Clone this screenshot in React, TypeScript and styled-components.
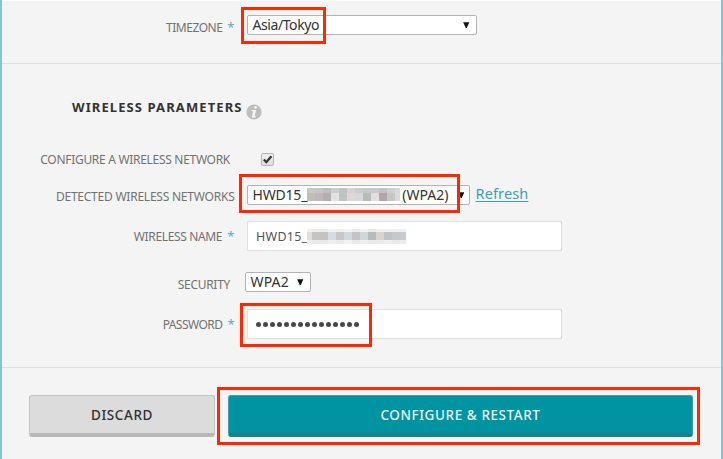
import React from "react";
import styled, { createGlobalStyle } from "styled-components";

const GlobalStyle = createGlobalStyle`
  *, *::before, *::after { box-sizing: border-box; }
  body { margin: 0; background: #f4f4f4; overflow: hidden; }
`;

const Page = styled.main`
  width: 723px;
  height: 459px;
  overflow: hidden;
  background: #f4f4f4;
  border: solid #7fc6ce;
  border-width: 0 2px;
  box-shadow: inset 0 1px #fcfcfc;
  font-family: "Noto Sans", "Open Sans", sans-serif;
  color: #333;
`;

const Section = styled.section<{ $height: number; $top: number }>`
  height: ${(p) => p.$height}px;
  padding-top: ${(p) => p.$top}px;
  border-bottom: 1px solid #dedede;
`;

const Heading = styled.header`
  display: flex;
  align-items: flex-start;
  height: 51px;
  padding-left: 70px;
`;

const Title = styled.h2`
  margin: 0;
  width: 174px;
  font-size: 13px;
  line-height: 16px;
  font-weight: 700;
  letter-spacing: 1.1px;
  white-space: nowrap;
`;

const InfoIcon = styled.svg`
  flex: none;
  width: 16px;
  height: 16px;
  margin-top: 5px;
`;

const Row = styled.div<{ $height: number; $after?: number }>`
  display: flex;
  align-items: flex-start;
  height: ${(p) => p.$height}px;
  margin-bottom: ${(p) => p.$after ?? 0}px;
`;

const Label = styled.label<{ $line: number; $end: number; $track?: number }>`
  flex: none;
  width: 245px;
  padding-right: ${(p) => p.$end}px;
  text-align: right;
  white-space: nowrap;
  font-size: 12px;
  line-height: ${(p) => p.$line}px;
  letter-spacing: ${(p) => p.$track ?? -0.3}px;
  color: #727272;
`;

const Star = styled.span`
  margin-left: 5px;
  font-size: 13px;
  line-height: 1;
  color: #5fa9b5;
`;

const Control = styled.div<{ $shift?: number }>`
  position: relative;
  display: flex;
  margin-left: ${(p) => p.$shift ?? 0}px;
`;

const Select = styled.div<{ $width: number; $track?: number; $arrow: number }>`
  display: flex;
  align-items: center;
  width: ${(p) => p.$width}px;
  height: 19.5px;
  padding: 0 ${(p) => p.$arrow}px 0 4.5px;
  background: #fff;
  border: 1px solid #b4b4b4;
  border-radius: 2px;
  font-size: 14px;
  line-height: 17px;
  letter-spacing: ${(p) => p.$track ?? 0}px;
  white-space: nowrap;
`;

const Arrow = styled.svg`
  flex: none;
  width: 6.5px;
  height: 6.5px;
  margin-left: auto;
  fill: #111;
`;

const Suffix = styled.span`
  margin-left: 2px;
  letter-spacing: 0.05px;
`;

const Field = styled.div`
  display: flex;
  align-items: center;
  width: 315px;
  height: 30px;
  padding-left: 8px;
  background: #fff;
  border: 1px solid #e0e0e0;
  font-size: 12.5px;
  letter-spacing: 0.25px;
  color: #555;
`;

const Dots = styled.div`
  display: flex;
  gap: 2px;
  padding-top: 1px;
`;

const Dot = styled.i`
  width: 5px;
  height: 5px;
  border-radius: 50%;
  background: #484848;
`;

const Mosaic = styled.div<{ $rows: string; $columns: string }>`
  display: grid;
  flex: none;
  grid-template-rows: ${(p) => p.$rows};
  grid-template-columns: ${(p) => p.$columns};
`;

const Tile = styled.i<{ $color: string }>`
  background: ${(p) => p.$color};
`;

const Checkbox = styled.span`
  display: flex;
  width: 13px;
  height: 13px;
  margin-top: 3px;
  border: 1px solid #b5b5b5;
  border-radius: 2px;
  background: linear-gradient(#eee, #dedede);
`;

const Refresh = styled.a`
  margin-left: 5.5px;
  font-size: 14.5px;
  line-height: 17px;
  letter-spacing: 0.13px;
  color: #3aa3b0;
  text-decoration: underline;
  text-decoration-thickness: 1px;
  text-underline-offset: 1.5px;
`;

const Highlight = styled.span<{ $x: number; $y: number; $w: number; $h: number }>`
  position: absolute;
  left: ${(p) => p.$x}px;
  top: ${(p) => p.$y}px;
  width: ${(p) => p.$w}px;
  height: ${(p) => p.$h}px;
  border: 3px solid #ff2800;
  pointer-events: none;
`;

const Actions = styled.footer`
  display: flex;
  gap: 13px;
  padding: 27px 0 0 27px;
`;

const Button = styled.button<{ $primary?: boolean }>`
  width: ${(p) => (p.$primary ? 465 : 186)}px;
  height: 42px;
  padding: 1px 0 0;
  border: 1px solid ${(p) => (p.$primary ? "#3f9fa6" : "#c2c2c2")};
  border-bottom: 4px solid ${(p) => (p.$primary ? "#1c8187" : "#b8b8b8")};
  border-radius: 3px;
  background: ${(p) => (p.$primary ? "#0093a2" : "#dcdcdc")};
  color: ${(p) => (p.$primary ? "#e9f6f6" : "#303030")};
  font-family: inherit;
  font-size: 13.5px;
  line-height: 18px;
  font-weight: 500;
  letter-spacing: 0.57px;
`;

const NETWORK_TILES = [
  "#cbc7c8", "#c9c5c7", "#c3bdc0", "#cdcdcd", "#c5c1c3", "#d8d2d4", "#cdc9cc", "#c8c8c9", "#cac8c9", "#c3c1c3", "#cfced0", "#d8d8db",
  "#bfbfb8", "#bdb7b9", "#b2afb0", "#e0e3e2", "#bec4c2", "#ddd8d7", "#d5d9db", "#b8bbb9", "#dfdfdf", "#b1a6ab", "#c4c8c0", "#d9d9dc",
];

const NAME_TILES = [
  "#f3efed", "#ececeb", "#ececed", "#f2f2f4", "#eeeeef", "#f1f3f3", "#ebebeb", "#f1f3f3", "#e9e9ea", "#f2f0ed", "#eff0f1", "#eeeff0", "#f0f1f1",
  "#e3dcdb", "#c4c4c3", "#c4c2c2", "#d8dce2", "#c7c7c9", "#d3d8da", "#c5c4c5", "#d1d6d9", "#b9babc", "#d8d4d1", "#bec3c7", "#c7c8ca", "#c9cacc",
  "#f2eeee", "#e8e8e8", "#eaeaea", "#efeff1", "#ebe9ea", "#f1f2f2", "#e9eaea", "#eeeeef", "#e7e9e9", "#e9e9e8", "#eeeeef", "#eaeaeb", "#ececef",
];

const DownArrow = () => (
  <Arrow viewBox="0 0 7 7">
    <path d="M0.2 0.4h6.6L3.9 6.8h-.8z" />
  </Arrow>
);

const Required = () => <Star>*</Star>;

export default function App() {
  return (
    <>
      <GlobalStyle />
      <Page>
        <Section $height={64} $top={15}>
          <Row $height={20}>
            <Label $line={25} $end={13} $track={-0.5}>TIMEZONE<Required /></Label>
            <Control>
              <Select $width={230} $arrow={6.5} $track={-0.42}>Asia/Tokyo<DownArrow /></Select>
              <Highlight $x={-6} $y={-8} $w={85} $h={37} />
            </Control>
          </Row>
        </Section>

        <Section $height={304} $top={35}>
          <Heading>
            <Title>WIRELESS PARAMETERS</Title>
            <InfoIcon viewBox="0 0 16 16">
              <circle cx="8" cy="8" r="7.6" fill="#bdbdbd" />
              <circle cx="9.5" cy="3.4" r="1.45" fill="#f4f4f4" />
              <path d="M5.6 6h4.5L8.8 11.9c-.1.6.3.6 1.2.2l-.2.9c-1.9 1.2-4.3 1-3.8-.8L7 7.2 5.4 6.9z" fill="#f4f4f4" />
            </InfoIcon>
          </Heading>

          <Row $height={20} $after={15}>
            <Label $line={19} $end={17}>CONFIGURE A WIRELESS NETWORK</Label>
            <Control $shift={14}>
              <Checkbox>
                <svg width="11" height="11" viewBox="0 0 11 11">
                  <path d="M1.8 5.5 4.3 8.2 9.4 2.2" fill="none" stroke="#333" strokeWidth="2.2" />
                </svg>
              </Checkbox>
            </Control>
          </Row>

          <Row $height={20} $after={16}>
            <Label $line={24} $end={12.5} $track={-0.23}>DETECTED WIRELESS NETWORKS</Label>
            <Control>
              <Select $width={223} $arrow={5} $track={-0.2}>
                HWD15_
                <Mosaic $rows="5px 8px" $columns="repeat(11, 8px) 5px">
                  {NETWORK_TILES.map((color, i) => <Tile key={i} $color={color} />)}
                </Mosaic>
                <Suffix>(WPA2)</Suffix>
                <DownArrow />
              </Select>
              <Refresh>Refresh</Refresh>
              <Highlight $x={-8} $y={-11} $w={221} $h={39} />
            </Control>
          </Row>

          <Row $height={30} $after={21}>
            <Label $line={31.5} $end={13} $track={-0.35}>WIRELESS NAME<Required /></Label>
            <Control>
              <Field>
                HWD15_
                <Mosaic $rows="3px 8px 4px" $columns="5px repeat(11, 8px) 6px">
                  {NAME_TILES.map((color, i) => <Tile key={i} $color={color} />)}
                </Mosaic>
              </Field>
            </Control>
          </Row>

          <Row $height={20} $after={17}>
            <Label $line={25} $end={17}>SECURITY</Label>
            <Control $shift={-2}>
              <Select $width={66} $arrow={6.5} $track={0.15}>WPA2<DownArrow /></Select>
            </Control>
          </Row>

          <Row $height={30}>
            <Label $line={31.5} $end={13} $track={-0.55}>PASSWORD<Required /></Label>
            <Control>
              <Field>
                <Dots>
                  {Array.from({ length: 15 }, (_, i) => <Dot key={i} />)}
                </Dots>
              </Field>
              <Highlight $x={-7} $y={-6} $w={132} $h={44} />
            </Control>
          </Row>
        </Section>

        <Actions>
          <Button>DISCARD</Button>
          <Control>
            <Button $primary>CONFIGURE &amp; RESTART</Button>
            <Highlight $x={-11} $y={-8} $w={483} $h={58} />
          </Control>
        </Actions>
      </Page>
    </>
  );
}
